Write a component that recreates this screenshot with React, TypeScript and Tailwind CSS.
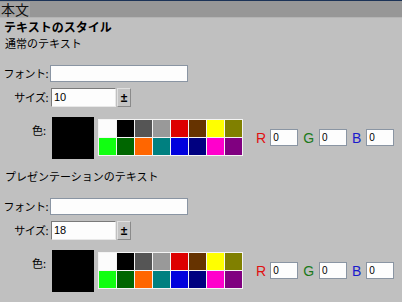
import React from "react";

const jp = { fontFamily: '"Noto Sans CJK JP", "Noto Sans", sans-serif' };
const latin = { fontFamily: '"Liberation Sans", Arial, sans-serif' };

const palette = [
  "#fcfcfc", "#000000", "#555555", "#999999", "#dd0000", "#663300", "#ffff00", "#808000",
  "#11ff11", "#006600", "#ff6600", "#008080", "#0000dd", "#000080", "#ff00cc", "#800080",
];

function Section({ title, size }: { title: string; size: string }) {
  return (
    <div className="flex flex-col">
      <div className="h-[17px] pl-[5px] text-[11px] leading-[17px] text-black" style={jp}>
        {title}
      </div>
      <div className="mt-[13px] flex items-center h-[17px]">
        <div className="w-[48px] text-right text-[11px] leading-[17px] tracking-[-0.5px]" style={jp}>
          フォント:
        </div>
        <div className="ml-[2px] w-[138px] h-[17px] bg-[#fdfdfd] border border-[#8a95a3]" />
      </div>
      <div className="mt-[6px] flex items-center h-[19px]">
        <div className="w-[48px] text-right text-[11px] leading-[19px] tracking-[-0.5px]" style={jp}>
          サイズ:
        </div>
        <div
          className="ml-[3px] w-[65px] h-[19px] bg-[#fdfdfd] border border-[#7a7a7a] border-r-[#e8e8e8] border-b-[#e8e8e8] text-[11px] leading-[17px] pl-[2px]"
          style={latin}
        >
          {size}
        </div>
        <div className="w-[14px] h-[19px] ml-[1px] bg-[#c4c4c4] border border-[#e0e0e0] border-r-[#8a8a8a] border-b-[#8a8a8a] flex items-center justify-center text-[12px] font-bold leading-none" style={latin}>
          ±
        </div>
      </div>
      <div className="mt-[10px] flex items-start">
        <div className="w-[46px] mt-[5px] text-right text-[11px] leading-[17px]" style={jp}>
          色:
        </div>
        <div className="ml-[6px] w-[42px] h-[42px] bg-black" />
        <div className="ml-[4px] mt-[2px] grid grid-cols-[repeat(8,17px)] grid-rows-[repeat(2,17px)] gap-[1px] p-[1px] bg-[#f4f4f4]">
          {palette.map((c, i) => (
            <div key={i} style={{ backgroundColor: c }} />
          ))}
        </div>
        <div className="ml-[13px] mt-[12px] flex items-center h-[17px]" style={latin}>
          <span className="text-[14px] leading-none text-[#e01010]">R</span>
          <div className="ml-[4px] w-[28px] h-[17px] bg-[#fdfdfd] border border-[#8a95a3] text-[10px] leading-[15px] pl-[2px]">0</div>
          <span className="ml-[5px] text-[14px] leading-none text-[#1a7a1a]">G</span>
          <div className="ml-[5px] w-[28px] h-[17px] bg-[#fdfdfd] border border-[#8a95a3] text-[10px] leading-[15px] pl-[2px]">0</div>
          <span className="ml-[5px] text-[14px] leading-none text-[#1a1acc]">B</span>
          <div className="ml-[5px] w-[28px] h-[17px] bg-[#fdfdfd] border border-[#8a95a3] text-[10px] leading-[15px] pl-[2px]">0</div>
        </div>
      </div>
    </div>
  );
}

export default function App() {
  return (
    <div className="w-[402px] h-[302px] bg-[#c0c0c0] overflow-hidden flex flex-col">
      <div className="h-[17px] border-t border-[#1c3357] bg-[#979797] flex items-center">
        <span className="text-[14px] leading-[15px] text-[#111] bg-[#a2a2a2] pl-[1px] pr-[1px]" style={jp}>
          本文
        </span>
      </div>
      <div className="h-[1px] bg-[#b4b4b4]" />
      <div className="h-[17px] pl-[4px] text-[12px] font-bold leading-[17px] text-black" style={jp}>
        テキストのスタイル
      </div>
      <Section title="通常のテキスト" size="10" />
      <div className="mt-[9px]">
        <Section title="プレゼンテーションのテキスト" size="18" />
      </div>
    </div>
  );
}
